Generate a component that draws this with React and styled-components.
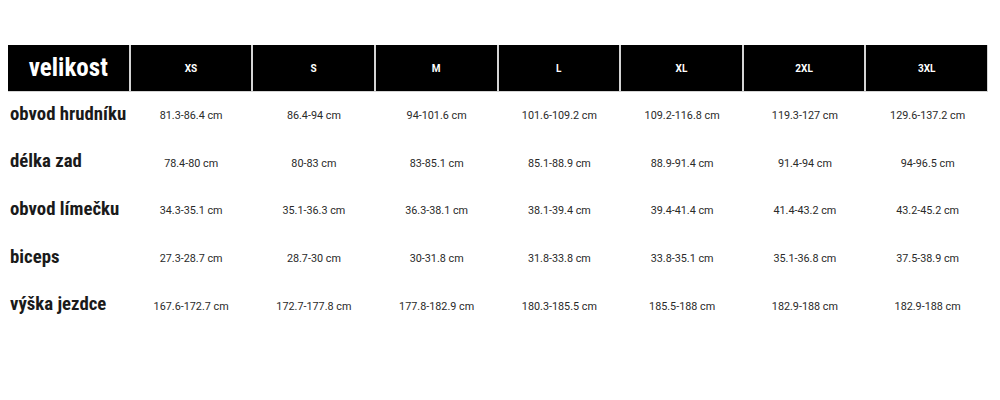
import React from "react";
import styled, { createGlobalStyle } from "styled-components";

const GlobalStyle = createGlobalStyle`
  body {
    margin: 8px;
    background: #ffffff;
    font-family: Roboto, "Liberation Sans", sans-serif;
  }
`;

const Page = styled.div`
  padding-top: 37px;
  width: 980px;
`;

const Grid = styled.div`
  display: grid;
  grid-template-columns: repeat(8, 1fr);
  column-gap: 2px;
`;

const HeaderRow = styled(Grid)`
  box-sizing: border-box;
  background: #d4d4d4;
  border: 1px solid #d4d4d4;
  border-left: none;
  border-top: none;
  height: 47px;
`;

const HeadCell = styled.div`
  background: #000;
  color: #fff;
  display: flex;
  align-items: center;
  justify-content: center;
  font-family: ${(p) => (p.$first ? '"Roboto Condensed", Roboto, sans-serif' : "Roboto, sans-serif")};
  font-weight: 700;
  font-size: ${(p) => (p.$first ? "25px" : "10px")};
  padding-bottom: ${(p) => (p.$first ? "2px" : "0")};
`;

const BodyRow = styled(Grid)`
  height: 47.6px;
  align-items: center;
`;

const Label = styled.div`
  font-family: "Roboto Condensed", Roboto, sans-serif;
  font-weight: 700;
  font-size: 18.8px;
  color: #1a1a1a;
  padding-left: 2px;
  padding-bottom: 4px;
  white-space: nowrap;
`;

const Value = styled.div`
  font-family: Roboto, sans-serif;
  font-size: 10.8px;
  color: #2a2a2a;
  text-align: center;
  white-space: nowrap;
`;

const sizes = ["XS", "S", "M", "L", "XL", "2XL", "3XL"];

const rows = [
  ["obvod hrudníku", ["81.3-86.4 cm", "86.4-94 cm", "94-101.6 cm", "101.6-109.2 cm", "109.2-116.8 cm", "119.3-127 cm", "129.6-137.2 cm"]],
  ["délka zad", ["78.4-80 cm", "80-83 cm", "83-85.1 cm", "85.1-88.9 cm", "88.9-91.4 cm", "91.4-94 cm", "94-96.5 cm"]],
  ["obvod límečku", ["34.3-35.1 cm", "35.1-36.3 cm", "36.3-38.1 cm", "38.1-39.4 cm", "39.4-41.4 cm", "41.4-43.2 cm", "43.2-45.2 cm"]],
  ["biceps", ["27.3-28.7 cm", "28.7-30 cm", "30-31.8 cm", "31.8-33.8 cm", "33.8-35.1 cm", "35.1-36.8 cm", "37.5-38.9 cm"]],
  ["výška jezdce", ["167.6-172.7 cm", "172.7-177.8 cm", "177.8-182.9 cm", "180.3-185.5 cm", "185.5-188 cm", "182.9-188 cm", "182.9-188 cm"]],
];

export default function App() {
  return (
    <>
      <GlobalStyle />
      <Page>
        <HeaderRow>
          <HeadCell $first>velikost</HeadCell>
          {sizes.map((s) => (
            <HeadCell key={s}>{s}</HeadCell>
          ))}
        </HeaderRow>
        {rows.map(([label, values]) => (
          <BodyRow key={label}>
            <Label>{label}</Label>
            {values.map((v, i) => (
              <Value key={i}>{v}</Value>
            ))}
          </BodyRow>
        ))}
      </Page>
    </>
  );
}
